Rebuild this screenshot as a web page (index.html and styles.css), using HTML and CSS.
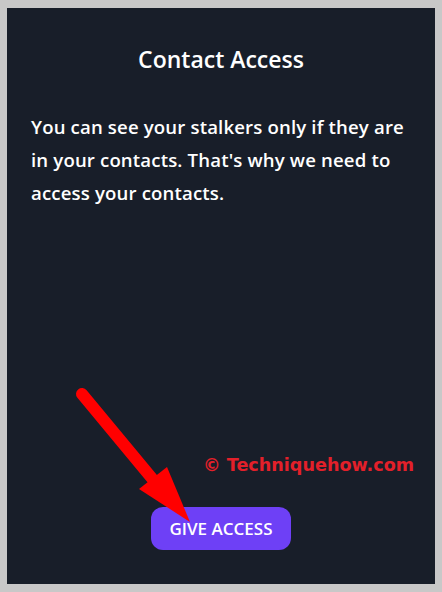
FILE: index.html
```html
<!DOCTYPE html>
<html lang="en">
<head>
    <meta charset="UTF-8">
    <title>Contact Access</title>
    <link rel="stylesheet" href="styles.css">
</head>
<body>
    <div class="painel">
        <h1 class="titulo">Contact Access</h1>
        <p class="texto">You can see your stalkers only if they are in your contacts. That's why we need to access your contacts.</p>
        <div class="acoes">
            <button type="button" class="botao">GIVE ACCESS</button>
        </div>

        <span class="marca">© Techniquehow.com</span>
        <svg class="seta" width="428" height="576" viewBox="0 0 428 576">
            <line x1="75" y1="386" x2="148" y2="474" stroke="#ff0000" stroke-width="12" stroke-linecap="round"/>
            <polygon points="132,481 160,459 183,514" fill="#ff0000"/>
        </svg>
    </div>
</body>
</html>
```

FILE: styles.css
```css
* { margin:0; padding:0; box-sizing:border-box; }
body {
    background-color:#c8c8c8;
    font-family:"Open Sans", "Noto Sans", sans-serif;
}
.painel {
    position:relative;
    margin:8px 7px 0 7px;
    width:428px;
    height:576px;
    background-color:#181e29;
    color:#ffffff;
    display:flex;
    flex-direction:column;
    padding:0 24px 34px 24px;
}
.titulo {
    margin-top:35px;
    text-align:center;
    font-size:23px;
    font-weight:600;
}
.texto {
    margin-top:35px;
    font-size:18.6px;
    font-weight:600;
    letter-spacing:0.15px;
    line-height:33px;
}
.acoes {
    margin-top:auto;
    display:flex;
    justify-content:center;
}
.botao {
    border:none;
    width:140px;
    height:43px;
    border-radius:12px;
    background-color:#6e40f6;
    color:#ffffff;
    font-family:"Open Sans", sans-serif;
    font-size:17px;
    font-weight:600;
}
.marca {
    position:absolute;
    left:196px;
    top:447px;
    color:#e3202a;
    font-family:"DejaVu Sans", sans-serif;
    font-size:17.6px;
    font-weight:bold;
}
.seta {
    position:absolute;
    left:0;
    top:0;
    pointer-events:none;
}
```
